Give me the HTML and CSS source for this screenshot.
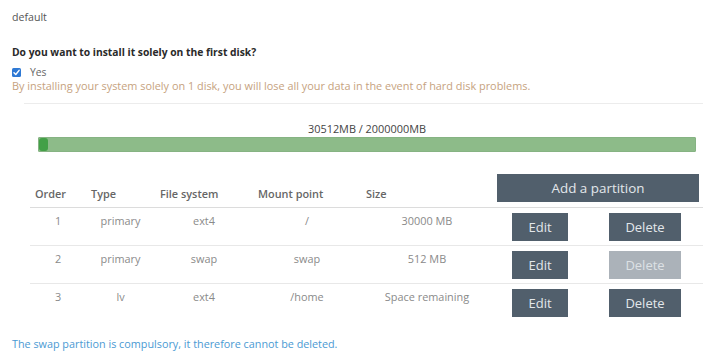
FILE: index.html
```html
<!DOCTYPE html>
<html>
<head>
<meta charset="utf-8">
<link rel="stylesheet" href="styles.css">
</head>
<body>
<div class="page">
  <div class="default">default</div>
  <div class="question">Do you want to install it solely on the first disk?</div>
  <label class="check-row">
    <span class="checkbox"><svg viewBox="0 0 10 10" width="9" height="9"><path d="M2.2 5.2 L4.2 7.2 L7.9 2.6" fill="none" stroke="#fff" stroke-width="1.6" stroke-linecap="round" stroke-linejoin="round"/></svg></span>
    <span class="yes">Yes</span>
  </label>
  <div class="warning">By installing your system solely on 1 disk, you will lose all your data in the event of hard disk problems.</div>
  <div class="separator"></div>

  <div class="usage">
    <div class="usage-label">30512MB / 2000000MB</div>
    <div class="bar"><div class="bar-fill"></div></div>
  </div>

  <table class="parts">
    <colgroup>
      <col class="c-order"><col class="c-type"><col class="c-fs"><col class="c-mount"><col class="c-size"><col class="c-edit"><col class="c-del">
    </colgroup>
    <thead>
      <tr>
        <th>Order</th><th>Type</th><th>File system</th><th>Mount point</th><th>Size</th>
        <th colspan="2" class="add-cell"><button class="btn btn-add">Add a partition</button></th>
      </tr>
    </thead>
    <tbody>
      <tr>
        <td>1</td><td>primary</td><td>ext4</td><td>/</td><td>30000 MB</td>
        <td class="act"><button class="btn">Edit</button></td>
        <td class="act"><button class="btn">Delete</button></td>
      </tr>
      <tr>
        <td>2</td><td>primary</td><td>swap</td><td>swap</td><td>512 MB</td>
        <td class="act"><button class="btn">Edit</button></td>
        <td class="act"><button class="btn btn-disabled">Delete</button></td>
      </tr>
      <tr class="last">
        <td>3</td><td>lv</td><td>ext4</td><td>/home</td><td>Space remaining</td>
        <td class="act"><button class="btn">Edit</button></td>
        <td class="act"><button class="btn">Delete</button></td>
      </tr>
    </tbody>
  </table>

  <div class="note">The swap partition is compulsory, it therefore cannot be deleted.</div>
</div>
</body>
</html>
```

FILE: styles.css
```css
html, body {
  margin: 0;
  padding: 0;
  background: #ffffff;
}
body {
  font-family: "Open Sans", "Noto Sans", sans-serif;
  color: #555;
}
.page {
  padding: 10px 12px 0 12px;
  width: 696px;
}
.default {
  font-size: 10.6px;
  line-height: 14px;
  color: #555;
}
.question {
  margin-top: 21px;
  font-size: 10.3px;
  font-weight: 700;
  line-height: 14px;
  color: #2a2a2a;
}
.check-row {
  margin-top: 6px;
  display: flex;
  align-items: center;
  height: 14px;
  font-size: 10.3px;
  line-height: 14px;
}
.checkbox {
  width: 9px;
  height: 9px;
  background: #2f79d4;
  border-radius: 1.5px;
  display: flex;
  align-items: center;
  justify-content: center;
}
.yes {
  margin-left: 9px;
  color: #666;
}
.warning {
  font-size: 10.9px;
  line-height: 14px;
  color: #c6a27e;
  white-space: nowrap;
}
.separator {
  margin: 10px 5px 0 12px;
  height: 1px;
  background: #ececec;
}
.usage {
  margin: 17px 12px 0 26px;
}
.usage-label {
  text-align: center;
  font-size: 10.9px;
  line-height: 15px;
  color: #444;
}
.bar {
  margin-top: 1px;
  height: 15px;
  background: #8dbb89;
  border: 1px solid #86b383;
  box-sizing: border-box;
  border-radius: 1px;
}
.bar-fill {
  width: 9px;
  height: 100%;
  background: #43a047;
  border-radius: 3px;
}
.parts {
  margin: 22px 0 0 18px;
  width: 673px;
  border-collapse: collapse;
  table-layout: fixed;
  font-size: 10.9px;
}
.c-order { width: 56px; }
.c-type { width: 69px; }
.c-fs { width: 98px; }
.c-mount { width: 108px; }
.c-size { width: 132px; }
.c-edit { width: 94px; }
.c-del { width: 116px; }
.parts th {
  text-align: left;
  vertical-align: bottom;
  font-weight: 600;
  color: #666;
  padding: 0 5px 6px 5px;
  line-height: 14px;
  border-bottom: 1px solid #dcdcdc;
  white-space: nowrap;
}
.parts th.add-cell {
  padding: 0 4px 5px 4px;
}
.parts td {
  text-align: center;
  vertical-align: top;
  color: #8a8a8a;
  padding: 6px 0 0 0;
  line-height: 14px;
  height: 31px;
  border-bottom: 1px solid #e8e8e8;
  white-space: nowrap;
}
.parts tr.last td {
  border-bottom: none;
}
.parts td.act {
  padding: 5px 0 0 0;
  height: 32px;
}
.btn {
  font-family: "Open Sans", "Noto Sans", sans-serif;
  font-size: 13px;
  height: 28px;
  padding: 0 16px;
  border: none;
  border-radius: 0;
  background: #515f6c;
  color: #e3e7eb;
  cursor: pointer;
}
.btn-add {
  width: 100%;
  font-size: 13.4px;
}
.btn-disabled {
  background: #abb2b9;
  color: #dde1e5;
}
.note {
  margin-top: 16px;
  font-size: 10.8px;
  line-height: 14px;
  color: #4a9ad3;
}
```
